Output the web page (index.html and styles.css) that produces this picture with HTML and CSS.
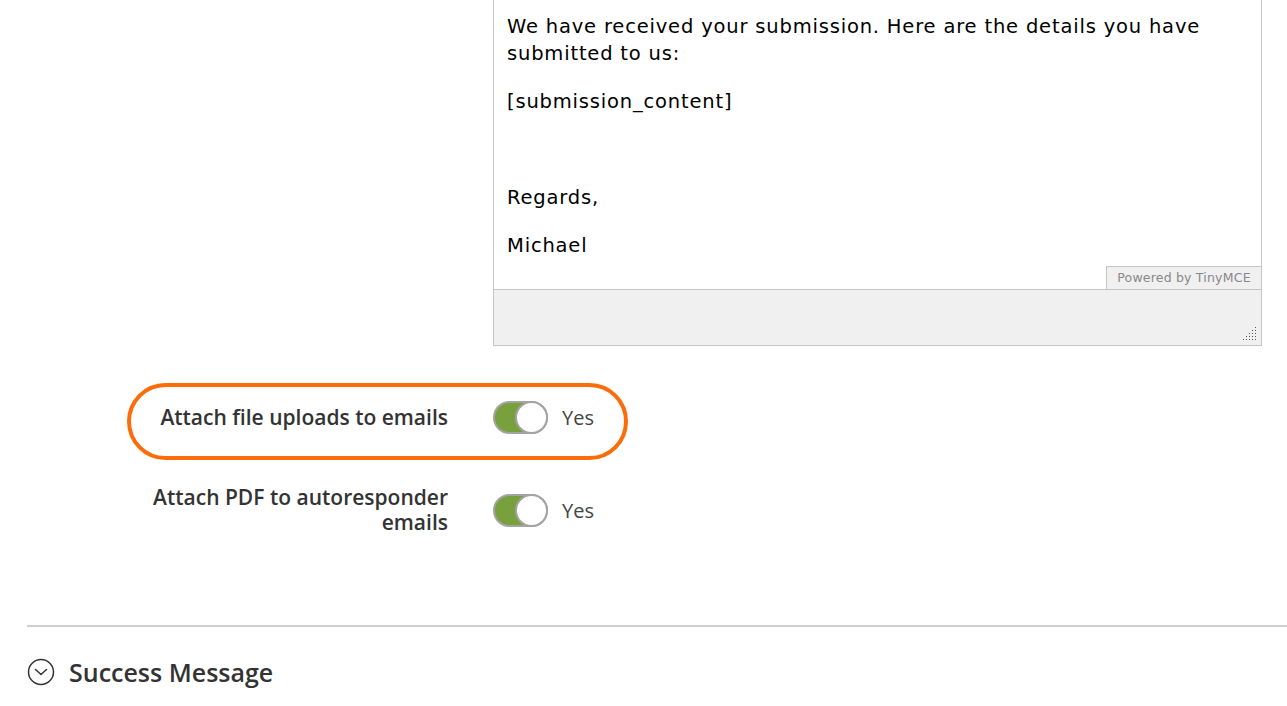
FILE: index.html
```html
<!DOCTYPE html>
<html>
<head>
<meta charset="utf-8">
<link rel="stylesheet" href="styles.css">
</head>
<body>
<div class="page">
  <div class="editor">
    <div class="editor-body">
      <p>We have received your submission. Here are the details you have submitted to us:</p>
      <p>[submission_content]</p>
      <p>&nbsp;</p>
      <p>Regards,</p>
      <p>Michael</p>
      <span class="powered">Powered by TinyMCE</span>
    </div>
    <div class="statusbar">
      <svg class="grip" width="14" height="13" viewBox="0 0 14 13">
        <g fill="#555">
          <rect x="12" y="0" width="1" height="1"/>
          <rect x="9" y="3" width="1" height="1"/><rect x="12" y="3" width="1" height="1"/>
          <rect x="6" y="6" width="1" height="1"/><rect x="9" y="6" width="1" height="1"/><rect x="12" y="6" width="1" height="1"/>
          <rect x="3" y="9" width="1" height="1"/><rect x="6" y="9" width="1" height="1"/><rect x="9" y="9" width="1" height="1"/><rect x="12" y="9" width="1" height="1"/>
          <rect x="0" y="12" width="1" height="1"/><rect x="3" y="12" width="1" height="1"/><rect x="6" y="12" width="1" height="1"/><rect x="9" y="12" width="1" height="1"/><rect x="12" y="12" width="1" height="1"/>
        </g>
      </svg>
    </div>
  </div>

  <div class="row highlighted">
    <label class="label">Attach file uploads to emails</label>
    <span class="toggle"><span class="knob"></span></span>
    <span class="value">Yes</span>
  </div>

  <div class="row second">
    <label class="label">Attach PDF to autoresponder emails</label>
    <span class="toggle"><span class="knob"></span></span>
    <span class="value">Yes</span>
  </div>

  <div class="section">
    <svg class="chev" width="28" height="28" viewBox="0 0 28 28">
      <circle cx="14" cy="14" r="12.5" fill="none" stroke="#333" stroke-width="1.5"/>
      <path d="M8.5 11.5 L14 16.5 L19.5 11.5" fill="none" stroke="#333" stroke-width="1.5" stroke-linecap="round" stroke-linejoin="round"/>
    </svg>
    <h2 class="section-title">Success Message</h2>
  </div>
</div>
</body>
</html>
```

FILE: styles.css
```css
html, body {
  margin: 0;
  padding: 0;
  background: #fff;
}
.page {
  width: 1287px;
  height: 706px;
  overflow: hidden;
  font-family: "Open Sans", "Liberation Sans", sans-serif;
}
.editor {
  margin-left: 493px;
  width: 769px;
  box-sizing: border-box;
  border-left: 1px solid #c5c5c5;
  border-right: 1px solid #c5c5c5;
  border-bottom: 1px solid #c5c5c5;
}
.editor-body {
  position: relative;
  height: 289px;
  box-sizing: border-box;
  padding: 13px 13px 0 13px;
  font-family: "DejaVu Sans", Verdana, sans-serif;
  font-size: 19.5px;
  letter-spacing: 0.82px;
  line-height: 27px;
  color: #000;
}
.editor-body p {
  margin: 0 0 21px 0;
}
.powered {
  position: absolute;
  right: 0;
  bottom: 0;
  width: 155px;
  height: 23px;
  box-sizing: border-box;
  border: 1px solid #c5c5c5;
  border-right: none;
  border-bottom: none;
  background: #f0f0f0;
  color: #888;
  font-size: 12.5px;
  letter-spacing: 0.2px;
  line-height: 21px;
  text-align: center;
}
.statusbar {
  position: relative;
  height: 56px;
  box-sizing: border-box;
  border-top: 1px solid #c5c5c5;
  background: #f0f0f0;
  display: flex;
  justify-content: flex-end;
  align-items: flex-end;
  padding: 0 4px 5px 0;
}
.row {
  margin-left: 127px;
  width: 501px;
  box-sizing: border-box;
  display: grid;
  grid-template-columns: 362px 55px auto;
  align-items: center;
  border: 4px solid transparent;
}
.row.highlighted {
  margin-top: 37px;
  height: 77px;
  padding-bottom: 8px;
  border-color: #fc6d0a;
  border-radius: 40px;
}
.row.second {
  margin-top: 21px;
  min-height: 58px;
}
.label {
  grid-column: 1;
  text-align: right;
  padding-right: 45px;
  font-weight: 600;
  font-size: 21px;
  line-height: 25px;
  color: #333;
}
.toggle {
  grid-column: 2;
  position: relative;
  width: 55px;
  height: 33px;
  box-sizing: border-box;
  border: 2px solid #a3a3a3;
  border-radius: 17px;
  background: #78a03c;
}
.knob {
  position: absolute;
  right: -2px;
  top: -2px;
  width: 33px;
  height: 33px;
  box-sizing: border-box;
  border-radius: 50%;
  background: #fff;
  border: 2px solid #a3a3a3;
}
.value {
  grid-column: 3;
  padding-left: 14px;
  font-size: 20px;
  color: #444;
}
.section {
  margin-top: 86px;
  margin-left: 27px;
  border-top: 2px solid #cfcfcf;
  display: flex;
  align-items: center;
  padding-top: 29px;
  gap: 14px;
}
.chev {
  flex: none;
}
.section-title {
  margin: 0;
  font-weight: 600;
  font-size: 25px;
  color: #333;
  line-height: 32px;
}
```
